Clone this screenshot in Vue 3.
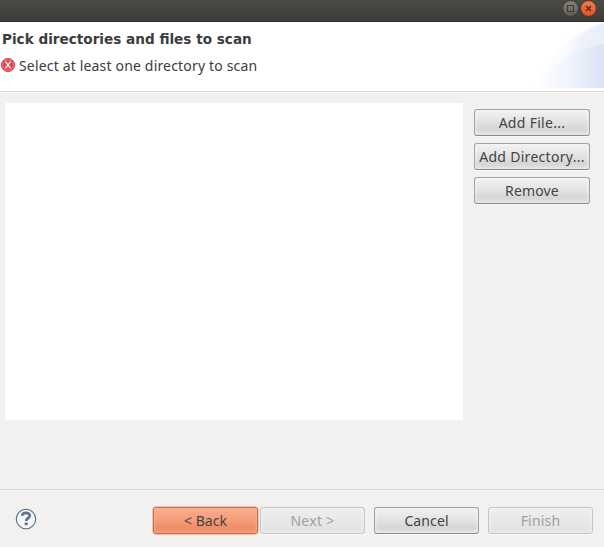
<script setup>
const sideButtons = [
  { label: 'Add File...', key: 'file' },
  { label: 'Add Directory...', key: 'directory' },
  { label: 'Remove', key: 'remove' }
]
</script>

<template>
  <div class="window">
    <div class="titlebar">
      <svg class="controls" width="36" height="20" viewBox="0 0 36 20">
        <defs>
          <linearGradient id="grey" x1="0" y1="0" x2="0" y2="1">
            <stop offset="0" stop-color="#85837a" /><stop offset="1" stop-color="#5e5c56" />
          </linearGradient>
          <linearGradient id="orange" x1="0" y1="0" x2="0" y2="1">
            <stop offset="0" stop-color="#f47c54" /><stop offset="1" stop-color="#e2501f" />
          </linearGradient>
        </defs>
        <circle cx="9.5" cy="8.5" r="7.8" fill="url(#grey)" stroke="#34332f" stroke-width=".6" />
        <rect x="6.5" y="5.5" width="6" height="6" fill="none" stroke="#3b3a36" />
        <circle cx="27.5" cy="8.5" r="7.8" fill="url(#orange)" stroke="#34332f" stroke-width=".6" />
        <path d="M25 6l5 5M30 6l-5 5" stroke="#4a2a20" stroke-width="1.3" />
      </svg>
    </div>
    <header class="header">
      <div class="heading">
        <h1>Pick directories and files to scan</h1>
        <p>
          <svg width="14" height="14" viewBox="0 0 14 14">
            <circle cx="7" cy="7" r="6.5" fill="#e3404f" stroke="#d03a48" />
            <circle cx="7" cy="7" r="5.4" fill="none" stroke="#f0949c" stroke-width=".7" />
            <path d="M4.5 3.6l5 6.8M9.5 3.6L4.5 10.4" stroke="#fff" stroke-width="1.3" />
          </svg>
          <span class="message">Select at least one directory to scan</span>
        </p>
      </div>
      <svg class="banner" width="74" height="66" viewBox="0 0 74 66">
        <defs>
          <linearGradient id="sweep" x1="0" x2="1" y1="0" y2="0">
            <stop offset="0" stop-color="#fff" /><stop offset=".45" stop-color="#f9fbfe" /><stop offset="1" stop-color="#ebf0fb" />
          </linearGradient>
          <linearGradient id="sweepDeep" x1="0" x2="1" y1="0" y2="0">
            <stop offset="0" stop-color="#fff" /><stop offset=".5" stop-color="#f0f4fc" /><stop offset="1" stop-color="#dbe3f5" />
          </linearGradient>
        </defs>
        <path d="M4 66C18 34 42 9 74 1V66Z" fill="url(#sweep)" />
        <path d="M34 50C40 24 54 7 74 1V66H34Z" fill="#e5ebf9" opacity=".35" />
        <path d="M4 66C20 44 44 26 74 22V66Z" fill="url(#sweepDeep)" />
      </svg>
    </header>
    <main class="content">
      <div class="list"></div>
      <div class="side">
        <button v-for="b in sideButtons" :key="b.key"><span :class="b.key">{{ b.label }}</span></button>
      </div>
    </main>
    <footer class="footer">
      <svg class="help" width="22" height="22" viewBox="0 0 22 22">
        <circle cx="11" cy="11" r="9.7" fill="#f5f6f8" stroke="#526b8e" stroke-width="1.1" />
        <path d="M7.2 7.8C7.4 3.9 14.8 3.8 14.8 7.7C14.8 10.3 11.2 10 11.2 13" fill="none" stroke="#5b7195" stroke-width="2.7" />
        <rect x="9.7" y="14.6" width="3" height="2.7" rx=".6" fill="#5b7195" />
      </svg>
      <div class="actions">
        <button class="primary"><span>&lt; Back</span></button>
        <button class="next" disabled><span>Next &gt;</span></button>
        <button class="cancel"><span>Cancel</span></button>
        <button class="finish" disabled><span>Finish</span></button>
      </div>
    </footer>
  </div>
</template>

<style>
body { margin: 0; }
</style>

<style scoped>
.window { width: 604px; height: 547px; display: flex; flex-direction: column; overflow: hidden; background: #f2f1f0; color: #3c3c3c; font: 14px/20px "Noto Sans", "Open Sans", sans-serif; }
.titlebar { box-sizing: border-box; height: 22px; flex: none; display: flex; justify-content: flex-end; padding-right: 7px; background: linear-gradient(#4b4a45, #3d3c38); border-bottom: 1px solid #30302c; }
.controls { display: block; }
.header { box-sizing: border-box; height: 70px; flex: none; display: flex; justify-content: space-between; background: #fff; border-bottom: 1px solid #d9d8d7; }
.heading { padding: 7px 0 0 1px; white-space: nowrap; }
h1 { margin: 0; padding-left: 1px; font: bold 13.6px/20px "DejaVu Sans", sans-serif; }
p { margin: 7px 0 0; height: 20px; display: flex; align-items: center; gap: 4px; }
p svg { margin-top: -3px; }
.message { letter-spacing: .17px; }
.file, .directory { letter-spacing: .3px; }
.remove { letter-spacing: .15px; }
.banner { flex: none; }
.content { display: flex; flex: 1; padding: 11px 14px 0 5px; border-top: 1px solid #f8f7f6; box-sizing: border-box; }
.list { width: 458px; height: 317px; margin-top: -1px; background: #fff; }
.side { display: flex; flex-direction: column; gap: 7px; width: 116px; margin: 5px 0 0 11px; }
button { box-sizing: border-box; height: 27px; padding: 0; display: flex; align-items: center; justify-content: center; white-space: nowrap; font: inherit; color: #444; border: 1px solid #a4a3a1; border-bottom-color: #8b8a88; border-radius: 3px; background: linear-gradient(#f2f2f2, #e2e2e2 50%, #d6d6d6 75%, #dcdcdc); box-shadow: inset 0 0 4px #f5f5f5, 0 1px 0 #f9f9f8; }
button:disabled { color: #a0a09f; border-color: #c6c5c4; background: linear-gradient(#efefee, #e6e6e6 60%, #e1e1e1); }
.actions .primary { border-color: #bd7256; background: linear-gradient(#fbad8e, #f69c79 50%, #ef8f69 75%, #f39570); box-shadow: 0 0 0 1px #f6c0ac, inset 0 0 3px #ffb79c; }
.footer { box-sizing: border-box; height: 58px; flex: none; display: flex; justify-content: space-between; padding: 17px 11px 0 15px; border-top: 1px solid #d8d7d5; box-shadow: inset 0 1px #fafaf9; }
.help { margin-top: 1px; }
.actions { display: flex; }
.actions button { width: 105px; }
.actions .next { margin-left: 2px; letter-spacing: .3px; }
.cancel, .finish { margin-left: 9px; }
.actions .cancel { letter-spacing: .1px; }
.actions .finish { letter-spacing: .2px; }
</style>
